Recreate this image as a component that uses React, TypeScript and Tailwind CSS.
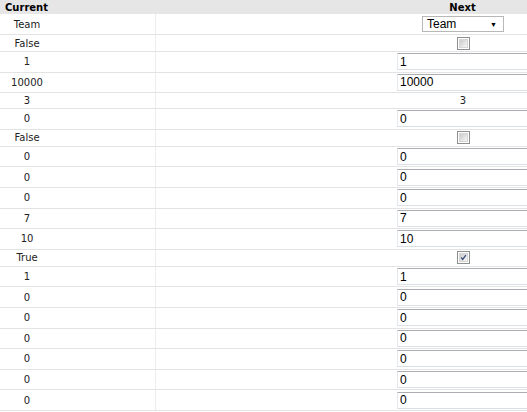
type Row = { cur: string; kind: "select" | "check" | "text" | "input"; val?: string; checked?: boolean };

const rows: Row[] = [
  { cur: "Team", kind: "select", val: "Team" },
  { cur: "False", kind: "check" },
  { cur: "1", kind: "input", val: "1" },
  { cur: "10000", kind: "input", val: "10000" },
  { cur: "3", kind: "text", val: "3" },
  { cur: "0", kind: "input", val: "0" },
  { cur: "False", kind: "check" },
  { cur: "0", kind: "input", val: "0" },
  { cur: "0", kind: "input", val: "0" },
  { cur: "0", kind: "input", val: "0" },
  { cur: "7", kind: "input", val: "7" },
  { cur: "10", kind: "input", val: "10" },
  { cur: "True", kind: "check", checked: true },
  { cur: "1", kind: "input", val: "1" },
  { cur: "0", kind: "input", val: "0" },
  { cur: "0", kind: "input", val: "0" },
  { cur: "0", kind: "input", val: "0" },
  { cur: "0", kind: "input", val: "0" },
  { cur: "0", kind: "input", val: "0" },
  { cur: "0", kind: "input", val: "0" },
];

const heights = {
  select: "h-[21px]",
  check: "h-[17px]",
  text: "h-[16px]",
  input: "h-[20.6px]",
};

const CheckBox = ({ checked }: { checked?: boolean }) => (
  <div className="w-[13px] h-[13px] border border-[#8e8f8f] bg-white p-[1px]">
    <div className="w-full h-full bg-gradient-to-br from-[#cbcbcb] to-[#f7f7f7] border border-[#d6d6d6] flex items-center justify-center">
      {checked && (
        <svg width="9" height="9" viewBox="0 0 9 9">
          <path d="M1.5 4.5 L3.5 7 L7.5 1.5" fill="none" stroke="#3d4f7c" strokeWidth="1.6" />
        </svg>
      )}
    </div>
  </div>
);

const Cell = ({ row }: { row: Row }) => {
  if (row.kind === "select")
    return (
      <div className="w-[82px] h-[16px] border border-[#b8b8b8] bg-white flex items-center justify-between pl-[4px] pr-[6px] text-[12px] text-black font-['Liberation_Sans',Arial,sans-serif]">
        <span>{row.val}</span>
        <span className="text-[7px] leading-none">▼</span>
      </div>
    );
  if (row.kind === "check") return <CheckBox checked={row.checked} />;
  if (row.kind === "text")
    return <span className="text-[10px] text-[#222] font-['DejaVu_Sans',Verdana,sans-serif]">{row.val}</span>;
  return (
    <div className="w-[132px] h-[17px] border border-[#dbdfe6] border-t-[#abadb3] border-l-[#e3e9ef] bg-white flex items-center pl-[2px] text-[12px] text-black font-['Liberation_Sans',Arial,sans-serif]">
      {row.val}
    </div>
  );
};

export default function App() {
  return (
    <div className="w-[527px] h-[412px] overflow-hidden bg-white">
      <div className="w-[770px] font-['DejaVu_Sans',Verdana,sans-serif] text-[10px] text-[#222]">
        <div className="flex h-[14px] bg-[#e6e6e6] items-center font-bold text-black">
          <div className="w-[155px] pl-[5px]">Current</div>
          <div className="flex-1 text-center">Next</div>
        </div>
        {rows.map((r, i) => (
          <div key={i} className={`flex border-b border-[#e3e3e3] ${heights[r.kind]}`}>
            <div className="w-[156px] border-r border-[#ececec] flex items-center">
              <div className="w-[54px] text-center">{r.cur}</div>
            </div>
            <div className="flex-1 flex items-center justify-center">
              <Cell row={r} />
            </div>
          </div>
        ))}
      </div>
    </div>
  );
}
